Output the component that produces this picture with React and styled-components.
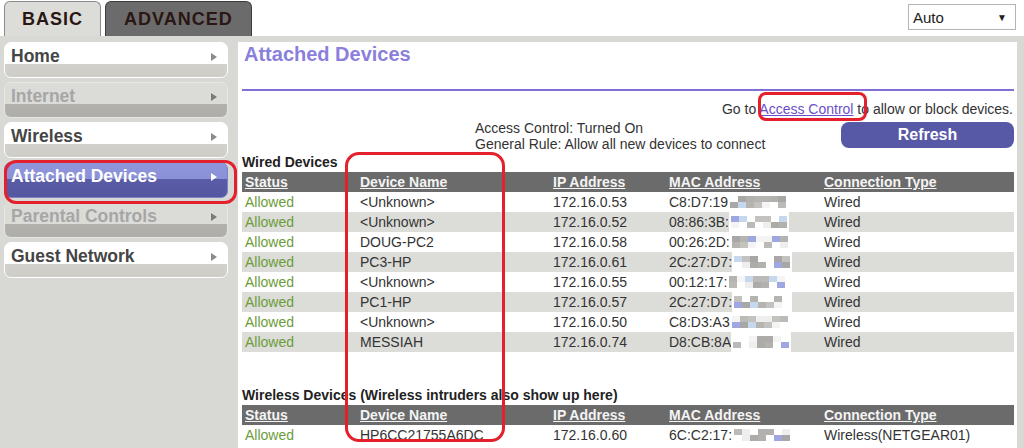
import React from 'react';
import styled, { createGlobalStyle } from 'styled-components';

const GlobalStyle = createGlobalStyle`
    body {
        margin: 0;
        background: #ffffff;
        font-family: "Liberation Sans", Arial, sans-serif;
    }
`;

const Page = styled.div`
    position: relative;
    width: 1024px;
    height: 448px;
    overflow: hidden;
    display: flex;
    flex-direction: column;
    background: #ffffff;
`;

const TopBar = styled.div`
    height: 36px;
    display: flex;
    align-items: flex-start;
    justify-content: space-between;
    padding: 1px 8px 0 4px;
    box-sizing: border-box;
`;

const Tabs = styled.div`
    display: flex;
    gap: 4px;
`;

const Tab = styled.div`
    height: 35px;
    box-sizing: border-box;
    padding: 0 ${p => p.$pad}px;
    display: flex;
    align-items: center;
    border: 1px solid ${p => p.$active ? '#8a8a8a' : '#3c3c3c'};
    border-bottom: none;
    border-radius: 6px 6px 0 0;
    background: ${p => p.$active ? '#dcdcd8' : '#6b6b6b'};
    color: #2a1612;
    font-size: 18px;
    font-weight: bold;
    letter-spacing: 1px;
`;

const Select = styled.div`
    margin-top: 3px;
    width: 108px;
    height: 26px;
    box-sizing: border-box;
    border: 1px solid #b4b4b4;
    display: flex;
    align-items: center;
    justify-content: space-between;
    padding: 0 8px 0 4px;
    font-size: 15px;
    color: #222;
`;

const Caret = styled.span`
    font-size: 10px;
    color: #222;
`;

const Body = styled.div`
    flex: 1;
    display: flex;
    background: #d8d8d4;
    padding-top: 6px;
`;

const Sidebar = styled.div`
    width: 234px;
    padding-left: 4px;
    display: flex;
    flex-direction: column;
    gap: 4px;
`;

const skins = {
    normal: { bg: 'linear-gradient(#ffffff 0, #ffffff 63%, #d2d0ca 63%, #cfcdc7 100%)', color: '#454545', arrow: '#8a8a8a', border: '#ffffff' },
    disabled: { bg: 'linear-gradient(#dbdbd7 0, #dbdbd7 63%, #b3b1ab 63%, #afada7 100%)', color: '#a6a6a6', arrow: '#7a7a7a', border: '#e6e6e2' },
    active: { bg: 'linear-gradient(#8f96db 0, #8a91d6 46%, #5a5ca7 46%, #5456a0 100%)', color: '#ffffff', arrow: '#ffffff', border: '#7c82c8' },
};

const MenuItem = styled.div`
    width: 224px;
    height: 36px;
    box-sizing: border-box;
    border: 1px solid ${p => skins[p.$kind].border};
    border-radius: 7px;
    background: ${p => skins[p.$kind].bg};
    display: flex;
    justify-content: space-between;
    padding: 3px 10px 0 6px;
    color: ${p => skins[p.$kind].color};
    font-size: 17.5px;
    font-weight: bold;
    line-height: 20px;
`;

const Arrow = styled.span`
    margin-top: 7px;
    width: 0;
    height: 0;
    border-top: 4px solid transparent;
    border-bottom: 4px solid transparent;
    border-left: 6px solid ${p => skins[p.$kind].arrow};
`;

const Panel = styled.div`
    flex: 1;
    margin-right: 7px;
    background: #ffffff;
    padding: 0 3px 0 4px;
    display: flex;
    flex-direction: column;
    color: #333;
    font-size: 14px;
`;

const Title = styled.h1`
    margin: 0;
    padding-left: 2px;
    font-size: 20px;
    line-height: 24px;
    color: #8b7fdc;
`;

const Rule = styled.div`
    height: 2px;
    margin-top: 23px;
    background: #7f6fd6;
`;

const GoTo = styled.div`
    margin-top: 10px;
    line-height: 16px;
    text-align: right;
    padding-right: 1px;
`;

const Link = styled.span`
    color: #6a4fc8;
    text-decoration: underline;
`;

const InfoRow = styled.div`
    margin-top: 3px;
    display: flex;
    justify-content: space-between;
    align-items: flex-start;
    padding-left: 233px;
`;

const Info = styled.div`
    line-height: 16px;
`;

const Refresh = styled.div`
    margin-top: 2px;
    width: 173px;
    height: 26px;
    border-radius: 8px;
    background: #5759a6;
    color: #ffffff;
    font-size: 16px;
    font-weight: bold;
    display: flex;
    align-items: center;
    justify-content: center;
`;

const Section = styled.div`
    margin-top: ${p => p.$top}px;
    font-weight: bold;
    line-height: 16px;
    color: #222;
`;

const Row = styled.div`
    height: 20px;
    display: grid;
    grid-template-columns: 115px 193px 116px 155px 1fr;
    align-items: center;
    background: ${p => p.$head ? '#6b6b6b' : p.$odd ? '#dcdcd8' : '#ffffff'};
    margin-top: ${p => p.$head ? 2 : 0}px;
`;

const HeadCell = styled.span`
    padding-left: 3px;
    color: #f4f4f4;
    font-weight: bold;
    text-decoration: underline;
`;

const Cell = styled.span`
    padding-left: 3px;
    color: ${p => p.$ok ? '#6c9c3a' : '#333'};
    display: flex;
    align-items: center;
    white-space: nowrap;
`;

const Mosaic = styled.span`
    display: inline-flex;
    align-items: center;
    height: 20px;
    padding: 0 2px;
    background: #ffffff;
`;

const Block = styled.span`
    width: 8px;
    height: 12px;
    background: linear-gradient(${p => p.$a} 0 50%, ${p => p.$b} 50% 100%);
`;

const Ring = styled.div`
    position: absolute;
    box-sizing: border-box;
    border: 3px solid #e3202b;
    border-radius: ${p => p.$r}px;
    pointer-events: none;
`;

const menu = [
    ['Home', 'normal'],
    ['Internet', 'disabled'],
    ['Wireless', 'normal'],
    ['Attached Devices', 'active'],
    ['Parental Controls', 'disabled'],
    ['Guest Network', 'normal'],
];

const wired = [
    ['<Unknown>', '172.16.0.53', 'C8:D7:19'],
    ['<Unknown>', '172.16.0.52', '08:86:3B:'],
    ['DOUG-PC2', '172.16.0.58', '00:26:2D:'],
    ['PC3-HP', '172.16.0.61', '2C:27:D7:'],
    ['<Unknown>', '172.16.0.55', '00:12:17:'],
    ['PC1-HP', '172.16.0.57', '2C:27:D7:'],
    ['<Unknown>', '172.16.0.50', 'C8:D3:A3'],
    ['MESSIAH', '172.16.0.74', 'D8:CB:8A'],
];

const shades = ['#b3b1ae', '#ffffff', '#a9a7a5', '#eeeeee', '#c4c2bf', '#ffffff', '#bcbab7', '#c6d8ee', '#adaba8', '#f4f4f4', '#9fa6e0', '#ffffff', '#b6b4b1'];

function Pixelated({ seed }) {
    const cells = [];
    for (let i = 0; i < 7; i++) {
        const a = shades[(seed * 31 + i * i * 7 + i * 3) % shades.length];
        const b = shades[(seed * seed * 11 + i * 5 + 4) % shades.length];
        cells.push(<Block key={i} $a={a} $b={b} />);
    }
    return <Mosaic>{cells}</Mosaic>;
}

function Header() {
    return (
        <Row $head>
            <HeadCell>Status</HeadCell>
            <HeadCell>Device Name</HeadCell>
            <HeadCell>IP Address</HeadCell>
            <HeadCell>MAC Address</HeadCell>
            <HeadCell>Connection Type</HeadCell>
        </Row>
    );
}

function DeviceRow({ name, ip, mac, type, odd, seed }) {
    return (
        <Row $odd={odd}>
            <Cell $ok>Allowed</Cell>
            <Cell>{name}</Cell>
            <Cell>{ip}</Cell>
            <Cell>{mac}<Pixelated seed={seed} /></Cell>
            <Cell>{type}</Cell>
        </Row>
    );
}

export default function App() {
    return (
        <Page>
            <GlobalStyle />
            <TopBar>
                <Tabs>
                    <Tab $active $pad={17}>BASIC</Tab>
                    <Tab $pad={18}>ADVANCED</Tab>
                </Tabs>
                <Select>Auto<Caret>▼</Caret></Select>
            </TopBar>
            <Body>
                <Sidebar>
                    {menu.map(([label, kind]) => (
                        <MenuItem key={label} $kind={kind}>
                            {label}
                            <Arrow $kind={kind} />
                        </MenuItem>
                    ))}
                </Sidebar>
                <Panel>
                    <Title>Attached Devices</Title>
                    <Rule />
                    <GoTo>Go to <Link>Access Control</Link> to allow or block devices.</GoTo>
                    <InfoRow>
                        <Info>
                            Access Control: Turned On<br />
                            General Rule: Allow all new devices to connect
                        </Info>
                        <Refresh>Refresh</Refresh>
                    </InfoRow>
                    <Section $top={2}>Wired Devices</Section>
                    <Header />
                    {wired.map(([name, ip, mac], i) => (
                        <DeviceRow key={i} name={name} ip={ip} mac={mac} type="Wired" odd={i % 2 === 1} seed={i + 1} />
                    ))}
                    <Section $top={35}>Wireless Devices (Wireless intruders also show up here)</Section>
                    <Header />
                    <DeviceRow name="HP6CC21755A6DC" ip="172.16.0.60" mac="6C:C2:17:" type="Wireless(NETGEAR01)" seed={9} />
                </Panel>
            </Body>
            <Ring $r={12} style={{ left: 4, top: 160, width: 233, height: 44 }} />
            <Ring $r={8} style={{ left: 758, top: 92, width: 109, height: 29 }} />
            <Ring $r={14} style={{ left: 345, top: 152, width: 160, height: 290 }} />
        </Page>
    );
}
